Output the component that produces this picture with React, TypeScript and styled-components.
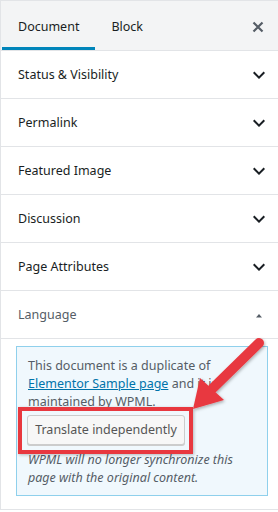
import React from 'react';
import styled, { createGlobalStyle } from 'styled-components';

const GlobalStyle = createGlobalStyle`
  html, body {
    margin: 0;
    padding: 0;
    background: #fff;
  }
  body {
    font-family: "Noto Sans", "Open Sans", sans-serif;
    font-size: 12px;
    color: #191e23;
  }
`;

const Sidebar = styled.div`
  position: relative;
  width: 277px;
  border-left: 1px solid #e2e4e7;
  border-top: 1px solid #e2e4e7;
  background: #fff;
`;

const Header = styled.div`
  display: flex;
  align-items: stretch;
  height: 49px;
  background: #f3f4f5;
  border-bottom: 1px solid #e2e4e7;
  padding-left: 1px;
`;

const Tab = styled.button<{ $active?: boolean }>`
  display: flex;
  align-items: center;
  padding: 2px 16px 0;
  margin: 0;
  border: 0;
  background: transparent;
  font: inherit;
  font-size: 12.5px;
  color: #191e23;
  box-shadow: ${(p) => (p.$active ? 'inset 0 -3px 0 #0085ba' : 'none')};
  cursor: pointer;
`;

const CloseButton = styled.button`
  margin-left: auto;
  width: 40px;
  display: flex;
  align-items: center;
  justify-content: center;
  border: 0;
  background: transparent;
  padding: 2px 0 0;
  color: #555d66;
`;

const Panel = styled.div`
  border-bottom: 1px solid #e2e4e7;
`;

const PanelTitle = styled.div<{ $open?: boolean }>`
  display: flex;
  align-items: center;
  justify-content: space-between;
  height: 47px;
  padding: 0 7px 0 17px;
  font-size: 12.5px;
  color: ${(p) => (p.$open ? '#555d66' : '#191e23')};
`;

const PanelBody = styled.div`
  border-top: 1px solid #e2e4e7;
  padding: 7px 10px 13px 15px;
`;

const Notice = styled.div`
  position: relative;
  background: #f0f8fd;
  border: 1px solid #8fd0ec;
  padding: 10px 8px 8px 11px;
  color: #555d66;
  font-size: 12.5px;
  line-height: 18px;
`;

const Link = styled.a`
  color: #0073aa;
  text-decoration: underline;
`;

const ButtonWrap = styled.div`
  position: relative;
  display: inline-block;
  margin: 4px 0 6px -1px;
`;

const Button = styled.button`
  display: block;
  height: 30px;
  width: 158px;
  padding: 0;
  white-space: nowrap;
  font: inherit;
  font-size: 12.5px;
  color: #555;
  background: #f7f7f7;
  border: 1px solid #ccc;
  border-radius: 3px;
  box-shadow: 0 1px 0 #ccc;
`;

const Highlight = styled.span`
  position: absolute;
  top: -8px;
  right: -8px;
  bottom: -9px;
  left: -9px;
  border: 4px solid #e8383f;
  box-shadow: 1px 1px 3px rgba(0, 0, 0, 0.25);
  pointer-events: none;
`;

const Note = styled.p`
  margin: 0;
  font-style: italic;
  color: #555d66;
`;

const Arrow = styled.svg`
  position: absolute;
  left: 180px;
  top: 330px;
  pointer-events: none;
`;

const Chevron = () => (
  <svg width="24" height="24" viewBox="0 0 24 24">
    <path d="M7.41 8.59L12 13.17l4.59-4.58L18 10l-6 6-6-6 1.41-1.41z" fill="#191e23" />
  </svg>
);

const Caret = () => (
  <svg width="24" height="24" viewBox="0 0 24 24">
    <path d="M9 14.5l3-3.5 3 3.5z" fill="#555d66" />
  </svg>
);

const panels = ['Status & Visibility', 'Permalink', 'Featured Image', 'Discussion', 'Page Attributes'];

export default function App() {
  return (
    <>
      <GlobalStyle />
      <Sidebar>
        <Header>
          <Tab $active>Document</Tab>
          <Tab>Block</Tab>
          <CloseButton aria-label="Close">
            <svg width="12" height="12" viewBox="0 0 12 12">
              <path d="M1.5 1.5l9 9M10.5 1.5l-9 9" stroke="#555d66" strokeWidth="2.2" />
            </svg>
          </CloseButton>
        </Header>
        {panels.map((t) => (
          <Panel key={t}>
            <PanelTitle>
              {t}
              <Chevron />
            </PanelTitle>
          </Panel>
        ))}
        <Panel>
          <PanelTitle $open>
            Language
            <Caret />
          </PanelTitle>
          <PanelBody>
            <Notice>
              This document is a duplicate of<br />
              <Link href="#">Elementor Sample page</Link> and it is<br />
              maintained by WPML.
              <br />
              <ButtonWrap>
                <Button type="button">Translate independently</Button>
                <Highlight />
              </ButtonWrap>
              <Note>
                WPML will no longer synchronize this<br />
                page with the original content.
              </Note>
            </Notice>
          </PanelBody>
        </Panel>
        <Arrow width="98" height="90" viewBox="0 0 98 90">
          <defs>
            <filter id="sh" x="-20%" y="-20%" width="140%" height="140%">
              <feDropShadow dx="1" dy="1.5" stdDeviation="1.5" floodColor="#000" floodOpacity="0.3" />
            </filter>
          </defs>
          <g filter="url(#sh)">
            <path d="M78 12L32 57" stroke="#e8383f" strokeWidth="10" strokeLinecap="round" />
            <polygon points="19,47 43,69 12,78" fill="#e8383f" />
          </g>
        </Arrow>
      </Sidebar>
    </>
  );
}
